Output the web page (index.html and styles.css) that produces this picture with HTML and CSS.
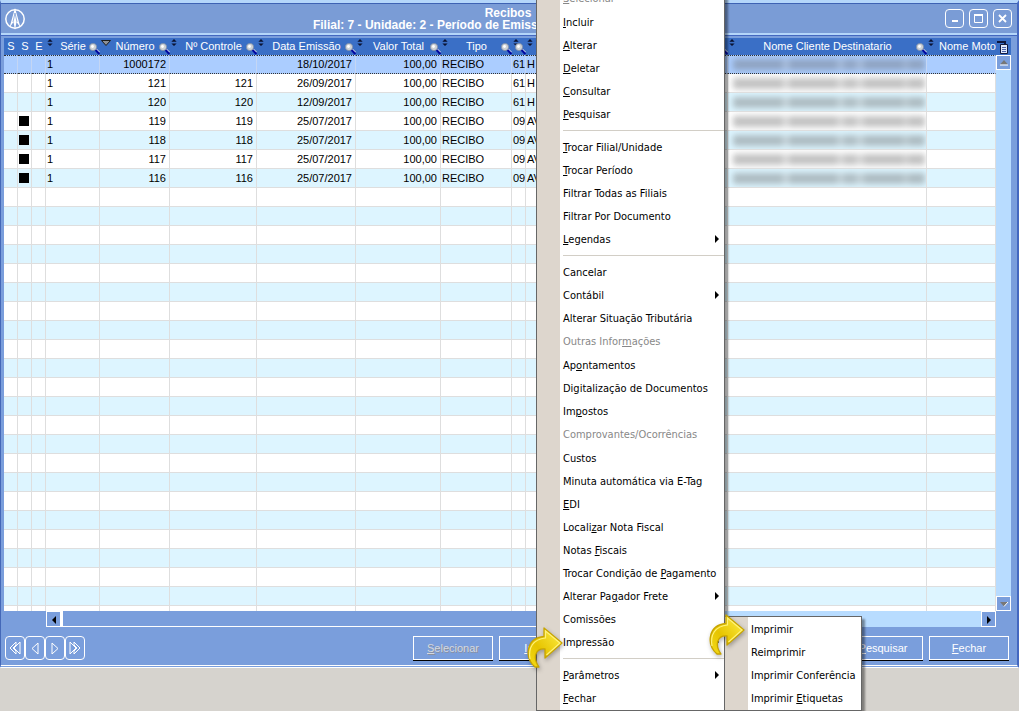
FILE: index.html
```html
<!DOCTYPE html>
<html lang="pt-BR">
<head>
  <meta charset="UTF-8" />
  <title>Recibos</title>
  <link rel="stylesheet" href="styles.css">
</head>
<body>
  <svg class="symbols" width="0" height="0" aria-hidden="true">
    <symbol id="lens" viewBox="0 0 11 12">
      <path d="M6 6L10.500 11" stroke="#0008a0" stroke-width="2.600"/>
      <path d="M7.500 6L11 9.500" stroke="#fff" stroke-width=".9"/>
      <circle cx="4" cy="4" r="3.600" fill="#cfd2d6" stroke="#7f8fa8" stroke-width=".8"/>
      <circle cx="3.500" cy="3.500" r="1.400" fill="#fff"/>
    </symbol>
    <symbol id="sort" viewBox="0 0 6 8">
      <path d="M3 0L6 3H0zM3 8L6 5H0z" fill="#0a1230"/>
    </symbol>
    <symbol id="sorted" viewBox="0 0 10 6">
      <path d="M.5.5h9L5 5.500z" fill="#8d9096" stroke="#1c1c1c"/>
    </symbol>
    <symbol id="curve" viewBox="0 0 38 44">
      <path d="M9 41C-2 31 0 12 18 10.500V2L36 17 19 32V23C10 22 6 31 13 41z" fill="url(#gold)" stroke="#c7a400" stroke-width="1.300" stroke-linejoin="round"/>
      <path d="M4 33C2 22 7 13 19.500 12V5L34 17 20.500 29" fill="none" stroke="#fff27a" stroke-width="1.200"/>
    </symbol>
    <linearGradient id="gold" x1="0" y1="1" x2="1" y2="0">
      <stop offset="0" stop-color="#f5dc1a"/>
      <stop offset=".4" stop-color="#e6c400"/>
      <stop offset="1" stop-color="#fff04a"/>
    </linearGradient>
  </svg>

  <main class="window">
    <header class="titlebar">
      <svg class="logo" viewBox="0 0 22 22" width="22" height="22">
        <circle cx="11" cy="11" r="9.200" fill="none" stroke="#fff" stroke-width="1.500"/>
        <path d="M11 0L5.500 19.500 9.500 14 11 22 12.500 14 16.500 19.500z" fill="#fff"/>
        <path d="M11 5L9 14M11 5L13 14" stroke="#7a9cd6" stroke-width=".8"/>
      </svg>
      <h1>Recibos<br>Filial: 7 - Unidade: 2 - Período de Emissão: 01/01/2017 até 31/12/2017</h1>
      <div class="window-buttons">
        <button aria-label="Minimizar"><svg viewBox="0 0 17 17"><path d="M6 11h6" stroke-width="2"/></svg></button>
        <button aria-label="Maximizar"><svg viewBox="0 0 17 17"><path d="M4.500 5h8v7.500h-8z"/><path d="M4 5h9" stroke-width="2"/></svg></button>
        <button aria-label="Fechar janela"><svg viewBox="0 0 17 17"><path d="M5 5l7 7M12 5l-7 7" stroke-width="1.800"/></svg></button>
      </div>
    </header>

    <section class="grid-area">
      <div class="table-box">
        <table>
          <colgroup>
            <col class="c-flag"><col class="c-flag"><col class="c-flag">
            <col class="c-serie"><col class="c-numero"><col class="c-controle">
            <col class="c-data"><col class="c-valor"><col class="c-tipo">
            <col class="c-flag"><col class="c-remetente"><col class="c-cliente"><col>
          </colgroup>
          <thead>
            <tr>
              <th>S</th>
              <th>S</th>
              <th>E</th>
              <th><svg class="sort"><use href="#sort"/></svg>Série<svg class="lens"><use href="#lens"/></svg></th>
              <th><svg class="sorted"><use href="#sorted"/></svg>Número<svg class="lens"><use href="#lens"/></svg></th>
              <th><svg class="sort"><use href="#sort"/></svg>Nº Controle<svg class="lens"><use href="#lens"/></svg></th>
              <th><svg class="sort"><use href="#sort"/></svg>Data Emissão<svg class="lens"><use href="#lens"/></svg></th>
              <th><svg class="sort"><use href="#sort"/></svg>Valor Total<svg class="lens"><use href="#lens"/></svg></th>
              <th><svg class="sort"><use href="#sort"/></svg>Tipo<svg class="lens"><use href="#lens"/></svg></th>
              <th><svg class="sort"><use href="#sort"/></svg><svg class="lens"><use href="#lens"/></svg></th>
              <th><svg class="sort"><use href="#sort"/></svg><svg class="lens"><use href="#lens"/></svg></th>
              <th><svg class="sort"><use href="#sort"/></svg>Nome Cliente Destinatario<svg class="lens"><use href="#lens"/></svg></th>
              <th class="left"><svg class="sort"><use href="#sort"/></svg>Nome Motorista</th>
            </tr>
          </thead>
          <tbody id="rows"></tbody>
        </table>
      </div>
      <div class="vscroll">
        <button class="columns" aria-label="Colunas"><svg viewBox="0 0 12 14" width="12" height="14"><path d="M1 2h8v3" fill="none" stroke="#10183c" stroke-width="2"/><path d="M4.500 4.500h7v9h-7z" fill="#dfe8fa" stroke="#10183c"/><path d="M6 7.500h4M6 9.500h4M6 11.500h4" stroke="#4a62a8"/></svg></button>
        <button class="scroll-btn" aria-label="Subir"><svg viewBox="0 0 13 13" width="13" height="13"><path d="M3 8.500h8L7 4z" fill="#777"/><path d="M3 9h8" stroke="#fff"/></svg></button>
        <div class="track"></div>
        <button class="scroll-btn" aria-label="Descer"><svg viewBox="0 0 13 13" width="13" height="13"><path d="M3 5h8L7 9.500z" fill="#777"/><path d="M11 5L7 9.500" stroke="#fff"/></svg></button>
      </div>
    </section>

    <div class="hscroll">
      <button class="scroll-btn" aria-label="Esquerda"><svg viewBox="0 0 13 13" width="13" height="13"><path d="M9 3v8L5 7z"/></svg></button>
      <div class="thumb"></div>
      <div class="track"></div>
      <button class="scroll-btn" aria-label="Direita"><svg viewBox="0 0 13 13" width="13" height="13"><path d="M5 3v8l4-4z"/></svg></button>
    </div>

    <footer>
      <nav class="pager">
        <button aria-label="Primeiro"><svg viewBox="0 0 18 22"><path d="M10 5L4 11l6 6v-3l-3-3 3-3zM14 5L8 11l6 6z"/></svg></button>
        <button aria-label="Anterior"><svg viewBox="0 0 18 22"><path d="M12 6L6 11.500l6 5.500z"/></svg></button>
        <button aria-label="Próximo"><svg viewBox="0 0 18 22"><path d="M6 6l6 5.500L6 17z"/></svg></button>
        <button aria-label="Último"><svg viewBox="0 0 18 22"><path d="M8 5l6 6-6 6v-3l3-3-3-3zM4 5l6 6-6 6z"/></svg></button>
      </nav>
      <div class="actions">
        <button class="off"><u>S</u>elecionar</button>
        <button><u>I</u>ncluir</button>
        <button><u>A</u>lterar</button>
        <button><u>D</u>eletar</button>
        <button><u>C</u>onsultar</button>
        <button><u>P</u>esquisar</button>
        <button><u>F</u>echar</button>
      </div>
    </footer>
  </main>

  <ul class="menu main-menu">
    <li class="disabled"><button disabled><u>S</u>elecionar</button></li>
    <li><button><u>I</u>ncluir</button></li>
    <li><button><u>A</u>lterar</button></li>
    <li><button><u>D</u>eletar</button></li>
    <li><button><u>C</u>onsultar</button></li>
    <li><button><u>P</u>esquisar</button></li>
    <li class="sep"></li>
    <li><button><u>T</u>rocar Filial/Unidade</button></li>
    <li><button><u>T</u>rocar Período</button></li>
    <li><button>Filtrar Todas as Filiais</button></li>
    <li><button>Filtrar Por Documento</button></li>
    <li class="more"><button><u>L</u>egendas</button></li>
    <li class="sep"></li>
    <li><button>Cancelar</button></li>
    <li class="more"><button>Contábil</button></li>
    <li><button>Alterar Situação Tributária</button></li>
    <li class="disabled"><button disabled>Outras Infor<u>m</u>ações</button></li>
    <li><button>Ap<u>o</u>ntamentos</button></li>
    <li><button>Digitalização de Documentos</button></li>
    <li><button>Im<u>p</u>ostos</button></li>
    <li class="disabled"><button disabled>Comprovantes/Ocorrências</button></li>
    <li><button>Custos</button></li>
    <li><button>Minuta automática via E-Tag</button></li>
    <li><button><u>E</u>DI</button></li>
    <li><button>Locali<u>z</u>ar Nota Fiscal</button></li>
    <li><button>Notas <u>F</u>iscais</button></li>
    <li><button>Trocar Condição de <u>P</u>agamento</button></li>
    <li class="more"><button>Alterar Pa<u>g</u>ador Frete</button></li>
    <li><button>Comissões</button></li>
    <li class="more">
      <button>Impressão</button>
      <svg class="pointer"><use href="#curve"/></svg>
      <ul class="menu submenu">
        <li><button>Imprimir</button><svg class="pointer"><use href="#curve"/></svg></li>
        <li><button>Reimprimir</button></li>
        <li><button>Imprimir Conferência</button></li>
        <li><button>Imprimir <u>E</u>tiquetas</button></li>
      </ul>
    </li>
    <li class="sep"></li>
    <li class="more"><button><u>P</u>arâmetros</button></li>
    <li><button><u>F</u>echar</button></li>
  </ul>

  <script>
    // numero, controle, data, codigo, remetente, status
    const recibos = [
      ['1000172', '', '18/10/2017', '61', 'H', false],
      ['121', '121', '26/09/2017', '61', 'H', false],
      ['120', '120', '12/09/2017', '61', 'H', false],
      ['119', '119', '25/07/2017', '09', 'AV', true],
      ['118', '118', '25/07/2017', '09', 'AV', true],
      ['117', '117', '25/07/2017', '09', 'AV', true],
      ['116', '116', '25/07/2017', '09', 'AV', true]
    ];
    const body = document.getElementById('rows');

    recibos.forEach((r, i) => {
      const tr = document.createElement('tr');
      if (i === 0) tr.className = 'selected';
      tr.innerHTML = `<td></td><td>${r[5] ? '<span class="mark"></span>' : ''}</td><td></td>
        <td>1</td><td class="num">${r[0]}</td><td class="num">${r[1]}</td>
        <td class="num">${r[2]}</td><td class="num">100,00</td><td>RECIBO</td>
        <td>${r[3]}</td><td>${r[4]}</td><td><span class="hidden-name"></span></td><td></td>`;
      body.appendChild(tr);
    });

    // blank lines down to the bottom of the grid
    for (let i = recibos.length; i < 60; i++) {
      const tr = document.createElement('tr');
      tr.innerHTML = '<td></td>'.repeat(13);
      body.appendChild(tr);
    }
  </script>
</body>
</html>
```

FILE: styles.css
```css
:root {
  --blue: #7a9edc;
  --title: #7a9cd6;
  --head: #3a6fc6;
  --light: #b8dcff;
  --selected: #abcdff;
  --stripe: #ddf5ff;
  --desk: #d6d3ce;
  --gutter: #ddd6cd;
}

* {
  box-sizing: border-box;
}

body {
  margin: 0;
  height: 100vh;
  padding-bottom: 43px;
  position: relative;
  overflow: hidden;
  background: var(--desk);
  font-family: "Liberation Sans", Arial, sans-serif;
  font-size: 11px;
}

button {
  font: inherit;
  color: inherit;
  background: none;
  border: none;
  padding: 0;
}

.symbols {
  position: absolute;
}

/* window */
.window {
  height: 100%;
  display: flex;
  flex-direction: column;
  background: var(--blue);
  border: 1px solid #4468b8;
  border-top: 3px solid #b4d6fa;
  border-bottom: 3px double #fff;
  border-right: 2px solid #4468c0;
}

.titlebar {
  height: 32px;
  flex: none;
  display: grid;
  grid-template-columns: 1fr auto 1fr;
  align-items: center;
  padding: 0 5px 0 3px;
  background: var(--title);
  border-top: 1px solid #3d62b4;
  border-bottom: 2px solid #b4d6fa;
  color: #fff;
}

.titlebar h1 {
  margin: 0;
  font-size: 12px;
  line-height: 12px;
  text-align: center;
  white-space: nowrap;
}

.window-buttons {
  display: flex;
  justify-content: flex-end;
  gap: 5px;
}

.window-buttons button {
  width: 19px;
  height: 19px;
  border: 1px solid #fff;
  border-radius: 4px;
}

.window-buttons svg,
.pager svg {
  display: block;
  width: 100%;
  height: 100%;
  fill: none;
  stroke: #fff;
}

/* grid */
.grid-area {
  flex: 1;
  min-height: 0;
  display: flex;
  padding: 2px 6px 0 3px;
  border-top: 1px solid #4468c0;
}

.table-box {
  flex: 1;
  min-width: 0;
  overflow: hidden;
  background: #fff;
}

table {
  width: 100%;
  table-layout: fixed;
  border-collapse: separate;
  border-spacing: 0;
}

.c-flag { width: 14px; }
.c-serie { width: 54px; }
.c-numero { width: 70px; }
.c-controle { width: 87px; }
.c-data { width: 99px; }
.c-valor { width: 85px; }
.c-tipo { width: 71px; }
.c-remetente { width: 202px; }
.c-cliente { width: 199px; }

th {
  position: relative;
  height: 17px;
  padding: 0;
  background: var(--head);
  color: #fff;
  font-weight: normal;
  line-height: 17px;
  white-space: nowrap;
}

th.left {
  text-align: left;
  padding-left: 12px;
  overflow: hidden;
}

.sort,
.sorted,
.lens {
  position: absolute;
}

.sort {
  left: 1px;
  top: 1px;
  width: 6px;
  height: 7px;
}

.sorted {
  left: 1px;
  top: 2px;
  width: 10px;
  height: 6px;
}

.lens {
  right: 0;
  bottom: 0;
  width: 11px;
  height: 12px;
}

td {
  height: 19px;
  padding: 0 1px;
  overflow: hidden;
  line-height: 18px;
  white-space: nowrap;
  border-right: 1px solid #dedede;
  border-bottom: 1px solid #dedede;
}

tbody tr:nth-child(odd) {
  background: var(--stripe);
}

tbody tr.selected {
  background: var(--selected);
}

.selected td {
  border-top: 1px dotted #333;
  border-bottom: 1px dotted #333;
  border-right-color: #c4d6f4;
  line-height: 17px;
}

.num {
  text-align: right;
  padding-right: 3px;
}

.mark {
  display: block;
  width: 10px;
  height: 10px;
  background: #000;
}

.hidden-name {
  display: block;
  height: 11px;
  margin: 0 0 0 4px;
  filter: blur(3px);
  opacity: .4;
  background: linear-gradient(90deg, #666 0 26%, #aaa 26% 29%, #666 29% 54%, #999 54% 58%, #6a6a6a 58% 64%, #999 64% 68%, #666 68% 89%, #999 89% 91%, #666 91%);
}

/* scrollbars */
.vscroll {
  width: 15px;
  display: flex;
  flex-direction: column;
}

.columns {
  height: 17px;
  flex: none;
  background: var(--head);
}

.columns svg,
.scroll-btn svg {
  display: block;
}

.scroll-btn {
  width: 15px;
  height: 15px;
  flex: none;
  background: var(--blue);
  border: 1px solid #fff;
}

.track {
  flex: 1;
  background: var(--light);
}

.hscroll {
  display: flex;
  height: 16px;
  flex: none;
  margin: 0 21px 0 45px;
}

.hscroll .scroll-btn {
  height: 16px;
}

.thumb {
  flex: 2;
  border: 1px solid #fff;
  border-top: none;
  border-left-width: 2px;
}

/* footer */
footer {
  flex: none;
  display: flex;
  justify-content: space-between;
  padding: 9px 8px 5px 4px;
}

.pager {
  display: flex;
}

.pager button {
  width: 20px;
  height: 24px;
  border: 1px solid #fff;
  border-radius: 4px;
}

.actions {
  display: flex;
  gap: 6px;
}

.actions button {
  width: 80px;
  height: 24px;
  color: #fff;
  border: 1px solid #fff;
  box-shadow: 0 1px #000;
}

.actions .off {
  color: #d4d8e0;
  text-shadow: 1px 1px #8a90a0;
}

/* menus */
.menu {
  position: absolute;
  margin: 0;
  padding: 0;
  list-style: none;
  background: linear-gradient(90deg, var(--gutter) 23px, #fff 23px);
  border: 1px solid #666;
  box-shadow: 3px 3px 2px rgba(0, 0, 0, .4);
  font-family: "DejaVu Sans Condensed", "DejaVu Sans", sans-serif;
  font-size: 11px;
}

.main-menu {
  left: 536px;
  top: -14px;
  width: 189px;
}

.menu li {
  position: relative;
}

.menu button {
  display: block;
  width: 100%;
  height: 23px;
  padding-left: 26px;
  text-align: left;
  white-space: nowrap;
}

.menu .disabled {
  height: 24px;
  color: #888;
}

.menu .sep {
  height: 10px;
  margin-left: 26px;
  background: linear-gradient(#d2cec6, #d2cec6) 0 4px / 100% 1px no-repeat;
}

.more::after {
  content: "";
  position: absolute;
  right: 5px;
  top: 7px;
  border: 4px solid transparent;
  border-left: 4px solid #000;
  border-right: none;
}

.submenu {
  left: 187px;
  top: -15px;
  width: 138px;
  padding-top: 1px;
}

.pointer {
  position: absolute;
  left: -11px;
  top: -5px;
  width: 38px;
  height: 44px;
  z-index: 1;
  filter: drop-shadow(1px 2px 2px rgba(0, 0, 0, .3));
}

.submenu .pointer {
  left: -17px;
}
```
